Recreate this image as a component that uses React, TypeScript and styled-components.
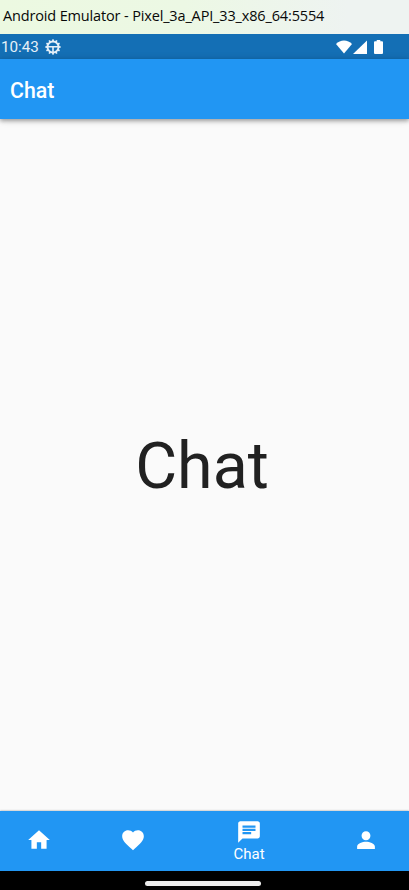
import React from "react";
import styled, { createGlobalStyle } from "styled-components";

const GlobalStyle = createGlobalStyle`
  * { box-sizing: border-box; }
  body { margin: 0; background: #fafafa; font-family: Roboto, "Liberation Sans", sans-serif; }
`;

const Window = styled.div`
  width: 409px;
  height: 890px;
  display: flex;
  flex-direction: column;
  overflow: hidden;
  background: #fafafa;
`;

const TitleBar = styled.header`
  height: 34px;
  flex: none;
  padding: 5px 0 0 3px;
  background: linear-gradient(90deg, #ecf9e1 0%, #ecf8e4 45%, #eef3f1 85%);
  color: #080808;
  font: 400 14.5px/22px "Open Sans", "Noto Sans", sans-serif;
  letter-spacing: -0.15px;
  white-space: nowrap;
`;

const StatusBar = styled.div`
  height: 25px;
  flex: none;
  display: flex;
  align-items: center;
  padding: 0 26px 0 1px;
  background: #146fb5;
  color: #e6f0f8;
`;

const Clock = styled.time`
  width: 44px;
  padding-top: 2px;
  font-size: 15.2px;
  line-height: 25px;
`;

const StatusIcons = styled.div`
  margin-left: auto;
  display: flex;
  align-items: center;
  color: #fff;
`;

const AppBar = styled.div`
  height: 60px;
  flex: none;
  display: flex;
  align-items: center;
  padding: 2px 10px 0 10px;
  background: #2196f3;
  color: #fff;
  font-size: 21.3px;
  font-weight: 500;
  box-shadow: 0 2px 4px rgba(0, 0, 0, 0.3), 0 1px 8px rgba(0, 0, 0, 0.14);
  z-index: 1;
`;

const Content = styled.main`
  flex: 1;
  display: flex;
  align-items: center;
  justify-content: center;
  padding: 2px 5px 0 0;
  color: #212121;
  font-size: 64.5px;
  line-height: 76px;
`;

const NavBar = styled.nav`
  height: 60px;
  flex: none;
  display: grid;
  grid-template-columns: 93.5px 116.5px 117px 46px;
  padding-left: 16px;
  background: #2196f3;
  box-shadow: 0 0 2px rgba(0, 0, 0, 0.4);
  z-index: 1;
`;

const NavItem = styled.a`
  width: 46px;
  display: flex;
  flex-direction: column;
  align-items: center;
  justify-content: center;
  padding-bottom: 2px;
  color: #fff;
`;

const NavLabel = styled.span`
  margin-bottom: -2px;
  font-size: 15px;
  line-height: 19px;
`;

const Glyph = styled.svg<{ $w: number; $h: number; $gap?: number }>`
  display: block;
  flex: none;
  width: ${(p) => p.$w}px;
  height: ${(p) => p.$h}px;
  margin-left: ${(p) => p.$gap ?? 0}px;
  fill: currentColor;
`;

const GestureBar = styled.footer`
  height: 19px;
  flex: none;
  display: flex;
  justify-content: center;
  padding: 10px 4px 0 0;
  background: #000;
`;

const GestureHandle = styled.div`
  width: 116px;
  height: 5px;
  border-radius: 3px;
  background: #ececec;
`;

const navItems = [
  { id: "home", d: "M10 20v-6h4v6h5v-8h3L12 3 2 12h3v8z" },
  {
    id: "favorite",
    d: "M12 21.35l-1.45-1.32C5.4 15.36 2 12.28 2 8.5 2 5.42 4.42 3 7.5 3c1.74 0 3.41.81 4.5 2.09C13.09 3.81 14.76 3 16.5 3 19.58 3 22 5.42 22 8.5c0 3.78-3.4 6.86-8.55 11.54L12 21.35z",
  },
  {
    id: "chat",
    label: "Chat",
    d: "M20 2H4c-1.1 0-1.99.9-1.99 2L2 22l4-4h14c1.1 0 2-.9 2-2V4c0-1.1-.9-2-2-2zM6 9h12v2H6V9zm8 5H6v-2h8v2zm4-6H6V6h12v2z",
  },
  {
    id: "person",
    d: "M12 12.300c2.300 0 4.100-1.850 4.100-4.150S14.300 4 12 4 7.900 5.850 7.900 8.150 9.700 12.300 12 12.300zm0 1.200c-3.200 0-8.200 1.400-8.200 4.600V20.200h16.400v-2.100c0-3.200-5-4.600-8.200-4.600z",
  },
];

const teeth = Array.from({ length: 12 }, (_, i) => i * 30);

export default function App() {
  return (
    <>
      <GlobalStyle />
      <Window>
        <TitleBar>Android Emulator - Pixel_3a_API_33_x86_64:5554</TitleBar>
        <StatusBar>
          <Clock>10:43</Clock>
          <Glyph $w={16} $h={16} viewBox="0 0 16 16">
            <circle cx="8" cy="8" r="5.5" fill="none" stroke="currentColor" strokeWidth="1.9" />
            {teeth.map((a) => (
              <rect key={a} x="7.1" y="0.4" width="1.8" height="2" transform={`rotate(${a} 8 8)`} />
            ))}
            <path d="M3 7h10v1.500H8.800V13H7.200V8.500H3z" />
          </Glyph>
          <StatusIcons>
            <Glyph $w={16} $h={14} viewBox="0 0 16 14">
              <path d="M8 13.5L0 4C2 2 5 .5 8 .5S14 2 16 4z" />
            </Glyph>
            <Glyph $w={14} $h={14} $gap={1} viewBox="0 0 14 14">
              <path d="M0 14L14 .5V14z" />
            </Glyph>
            <Glyph $w={9} $h={14} $gap={7} viewBox="0 0 9 14">
              <path d="M2.7 0h3.6v1.3H8a1 1 0 0 1 1 1V13a1 1 0 0 1-1 1H1a1 1 0 0 1-1-1V2.300a1 1 0 0 1 1-1h1.700z" />
            </Glyph>
          </StatusIcons>
        </StatusBar>
        <AppBar>Chat</AppBar>
        <Content>Chat</Content>
        <NavBar>
          {navItems.map((item) => (
            <NavItem key={item.id}>
              <Glyph $w={26} $h={26} viewBox="0 0 24 24">
                <path d={item.d} />
              </Glyph>
              {item.label && <NavLabel>{item.label}</NavLabel>}
            </NavItem>
          ))}
        </NavBar>
        <GestureBar>
          <GestureHandle />
        </GestureBar>
      </Window>
    </>
  );
}
